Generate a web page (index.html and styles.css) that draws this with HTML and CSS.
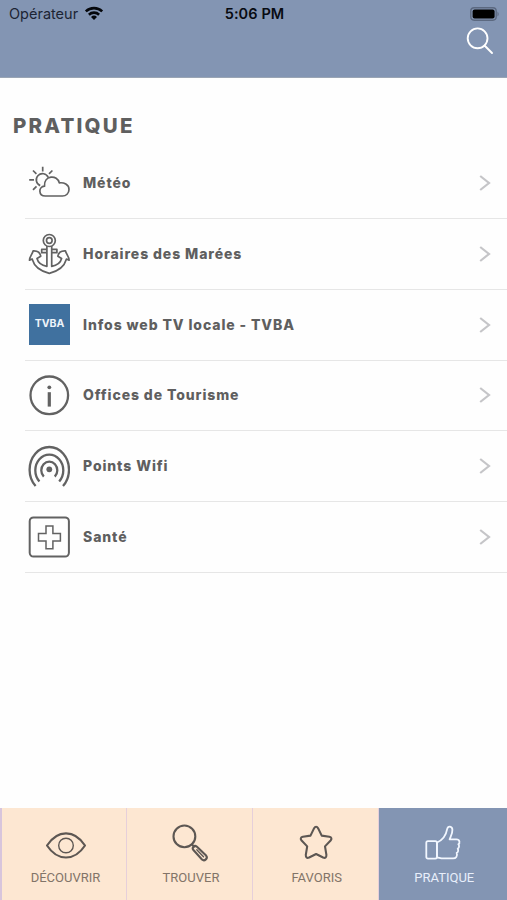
FILE: index.html
```html
<!DOCTYPE html>
<html lang="fr">
<head>
<meta charset="utf-8">
<title>Pratique</title>
<link rel="stylesheet" href="styles.css">
</head>
<body>
<div class="app">
  <header class="header">
    <div class="status">
      <div class="carrier"><span class="carrier-name">Opérateur</span>
        <svg class="wifi" viewBox="0 0 20 15" width="20" height="15"><path d="M1.8 5.4a12 12 0 0 1 16.4 0M4.9 8.700a7.400 7.400 0 0 1 10.200 0"/><path class="solid" d="M10 14l-3-3.100a4.300 4.300 0 0 1 6 0z"/></svg>
      </div>
      <span class="time">5:06 PM</span>
      <svg class="battery" viewBox="0 0 30 14" width="30" height="14"><rect class="shell" x=".8" y=".8" width="25.4" height="12.4" rx="3.4"/><rect x="2.6" y="2.4" width="22" height="9.2" rx="2"/><path class="cap" d="M27.5 4.4q2.4 2.6 0 5.2z"/></svg>
    </div>
    <svg class="search" viewBox="0 0 28 28" width="28" height="28"><circle cx="11.600" cy="11.300" r="9.900"/><path d="M18.500 18.500l7.500 7.500"/></svg>
  </header>
  <main class="content">
    <h1 class="title">PRATIQUE</h1>
    <ul class="list">
      <li class="row"><svg class="icon thin" viewBox="0 0 42 42"><path d="M17.300 34c-7 0-7.200-9.300-.8-9.800C15.700 13 29.500 12.500 31.300 20.900c4.500-.7 9.700 1.700 9.700 6.600 0 4-3 6.500-6.500 6.500z"/><path d="M20.200 15.400a6.200 6.200 0 1 0-8 8.200M14.700 4.700v4.800M1.200 17.800H6M5 8.500l3.400 3.400M24.400 8.500L21 11.900M5 27.900l3.500-3.500"/></svg><span class="label">Météo</span><svg class="chev" viewBox="0 0 12 18"><path d="M1.200 2l8.800 7-8.800 7"/></svg></li>
      <li class="row"><svg class="icon thin" viewBox="0 0 42 42"><circle cx="21.300" cy="7.500" r="6"/><circle cx="21.300" cy="7.500" r="2.800"/><path d="M18.900 13v20.300C14 32.500 10 29.500 9 25.500l3.700-2.300C12.200 19.500 9.500 17.600 5.200 17.800 4.500 21 1.500 23.500 1.500 27.200l2.600-1.200c2 7 8.500 12.300 17.200 14.300 8.700-2 15.200-7.300 17.200-14.300l2.600 1.200c0-3.700-3-6.200-3.700-9.400-4.300-.2-7 1.700-7.500 5.400l3.700 2.300c-1 4-5 7-9.900 7.800V13M18.900 16.400h-5.200v3.300h5.200M23.700 16.400h5.200v3.300h-5.200"/></svg><span class="label">Horaires des Marées</span><svg class="chev" viewBox="0 0 12 18"><path d="M1.200 2l8.800 7-8.800 7"/></svg></li>
      <li class="row"><span class="tvba">TVBA</span><span class="label">Infos web TV locale - TVBA</span><svg class="chev" viewBox="0 0 12 18"><path d="M1.200 2l8.800 7-8.800 7"/></svg></li>
      <li class="row"><svg class="icon" viewBox="0 0 42 42"><circle cx="21.300" cy="21.300" r="18.800"/><circle class="fill" cx="21.300" cy="13.300" r="1.900"/><path class="stem" d="M21.300 18.200v14.400"/></svg><span class="label">Offices de Tourisme</span><svg class="chev" viewBox="0 0 12 18"><path d="M1.200 2l8.800 7-8.800 7"/></svg></li>
      <li class="row"><svg class="icon waves" viewBox="0 0 42 42"><circle class="fill" cx="21.300" cy="24.300" r="2.900"/><path d="M15.800 31.600A8 8.700 0 1 1 26.800 31.600M11.400 36.500A14 15.800 0 1 1 31.200 36.500M7.600 41A19.700 22.700 0 1 1 35 41"/></svg><span class="label">Points Wifi</span><svg class="chev" viewBox="0 0 12 18"><path d="M1.200 2l8.800 7-8.800 7"/></svg></li>
      <li class="row"><svg class="icon" viewBox="0 0 42 42"><rect class="box" x="1.700" y="1.400" width="39.200" height="39.200" rx="3.800"/><path class="cross" d="M18 10h6.900v7.600h7.500v7.300h-7.500v7.800H18v-7.800h-7.500v-7.300H18z"/></svg><span class="label">Santé</span><svg class="chev" viewBox="0 0 12 18"><path d="M1.200 2l8.800 7-8.800 7"/></svg></li>
    </ul>
  </main>
  <nav class="tabs">
    <div class="tab first"><svg viewBox="0 0 40 40"><path d="M1 21.500C11.500 5.300 28.500 5.300 39 21.500 28.500 37.500 11.500 37.500 1 21.500z"/><circle class="fine" cx="20" cy="21.500" r="7.300"/></svg><span>DÉCOUVRIR</span></div>
    <div class="tab"><svg viewBox="0 0 40 40"><circle cx="13.400" cy="12.400" r="10.900"/><path d="M21 20.500l2.200 2.200M22.200 25.800l8.800 9.700c2.500 2.200 6.300-1.200 4.100-3.900l-9.400-9.100c-2.400-1.700-5 1-3.500 3.300z"/><path class="fine" d="M25.800 25.800l6.700 7"/></svg><span>TROUVER</span></div>
    <div class="tab"><svg viewBox="0 0 40 40"><path d="M16.900 4.600q2.200-3.800 4.400 0l3.400 7 7.600 1.200q3.500 1 1.300 3.700l-5.600 5.900 1.400 8.500q.1 3.900-3.300 2.600L19.100 30l-7 3.500q-3.400 1.300-3.300-2.600l1.400-8.500-5.600-5.900q-2.200-2.700 1.300-3.700l7.600-1.200z"/></svg><span>FAVORIS</span></div>
    <div class="tab active"><svg viewBox="0 0 40 40"><rect x="2.300" y="17.200" width="10.600" height="17.500" rx="1.600"/><path d="M13 18.500c6-2.500 9.200-8 10.200-13.600.8-3.400 5-3 5.200.8.200 3.500-1.500 6.300-2.800 9.700h6.800c3.700 0 3.700 3.900 1.900 4.800 1.300 1.500.9 3.700-.6 4.500 1 1.600.4 3.500-1 4.200 1.100 3.400-.8 5.500-3.600 5.500H17.500L13 33.300z"/></svg><span>PRATIQUE</span></div>
  </nav>
</div>
</body>
</html>
```
FILE: styles.css
```css
* { box-sizing: border-box; }
body { margin: 0; background: #fefefe; }
.app { display: flex; flex-direction: column; width: 507px; height: 900px; overflow: hidden; }
svg { fill: none; flex: none; display: block; }

.header { height: 78px; background: #8395b3; border-bottom: 1px solid #9aa5b4; display: flex; flex-direction: column; }
.status { height: 27px; padding: 0 7px 0 9px; display: grid; grid-template-columns: 1fr auto 1fr; align-items: center; font-family: Inter, sans-serif; color: #080b12; }
.carrier { display: flex; align-items: center; gap: 5px; font-size: 14.500px; color: #1c2433; }
.carrier-name { width: 70px; white-space: nowrap; }
.wifi { stroke: #05070b; stroke-width: 2.600; }
.wifi .solid { fill: #05070b; stroke: none; }
.time { font-size: 14.500px; font-weight: 600; letter-spacing: .1px; }
.battery { justify-self: end; fill: #000; }
.battery .shell { fill: none; stroke: #5c6980; stroke-width: 1.400; }
.battery .cap { fill: #5c6980; }
.search { align-self: flex-end; margin-right: 13px; stroke: #fff; stroke-width: 1.900; stroke-linecap: round; }

.content { flex: 1; font-family: Inter, sans-serif; color: #5f5f5f; }
.title { margin: 0; padding: 34px 0 0 13px; height: 70px; font-size: 20.500px; line-height: 28px; font-weight: 800; letter-spacing: 2.200px; }
.list { list-style: none; margin: 0 0 0 25px; padding: 0; }
.row { height: 70.850px; padding: 0 16px 0 3px; border-bottom: 1px solid #e6e6e6; display: flex; align-items: center; }
.icon { width: 42px; height: 42px; stroke: #626262; stroke-width: 2.300; }
.icon .fill { fill: #626262; stroke: none; }
.icon .stem { stroke-width: 3.200; }
.thin { stroke-width: 1.700; stroke-linejoin: round; }
.waves { stroke-width: 2.300; }
.box { stroke-width: 2; }
.cross { stroke-width: 1.500; }
.tvba { width: 41px; height: 41px; margin: 0 0 0 1px; background: #40719f; color: #eef4fa; display: flex; align-items: center; justify-content: center; font-size: 10.500px; font-weight: 700; padding-bottom: 2px; }
.label { flex: 1; padding: 0 0 1px 13px; font-size: 14px; font-weight: 800; letter-spacing: .9px; white-space: nowrap; }
.chev { width: 12px; height: 18px; stroke: #c5c5c8; stroke-width: 2.200; }

.tabs { height: 92px; display: grid; grid-template-columns: 127px 126px 125.500px 1fr; background: #fde7d2; }
.tab { border-right: 1px solid #e6cfda; padding: 16px 0 0 3px; display: flex; flex-direction: column; align-items: center; font-family: Roboto, sans-serif; font-size: 13px; line-height: 18px; color: #827468; }
.first { border-left: 2px solid #d8c5dc; }
.tab svg { width: 40px; height: 40px; stroke: #5d5753; stroke-width: 2.100; stroke-linejoin: round; stroke-linecap: round; }
.tab span { margin-top: 5px; }
.tab .fine { stroke-width: 1.400; }
.active { background: #8395b3; color: #e8effb; border-right: 0; }
.active svg { stroke: #f2f7ff; stroke-width: 1.800; }
```
